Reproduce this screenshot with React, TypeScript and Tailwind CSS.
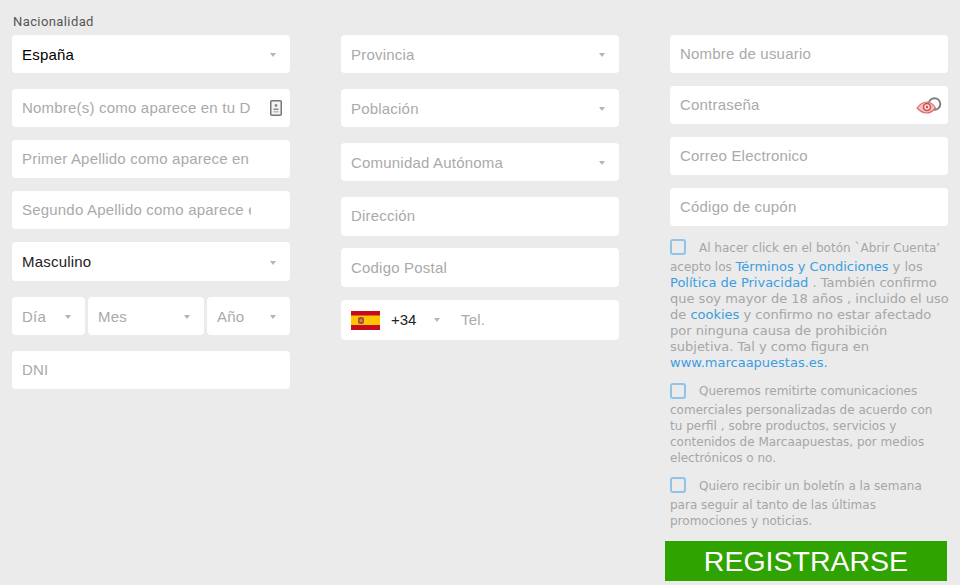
const font = "font-['Liberation_Sans',Arial,sans-serif]"

function Caret() {
  return <span className="h-0 w-0 border-x-[3.5px] border-t-[4px] border-x-transparent border-t-[#b5b5b5]" />
}

function Select({ label, tone = 'text-[#aaaaaa]', className }: { label: string; tone?: string; className: string }) {
  return (
    <div className={`flex items-center justify-between rounded-[4px] bg-white pl-[10px] pr-[14px] pt-[2px] text-[15px] tracking-[0.2px] ${tone} ${className}`}>
      <span>{label}</span>
      <Caret />
    </div>
  )
}

function Field({ placeholder, className, flush, children }: { placeholder: string; className: string; flush?: boolean; children?: React.ReactNode }) {
  return (
    <div className={`relative rounded-[4px] bg-white ${flush ? '' : 'pb-[2px]'} ${className}`}>
      <input
        placeholder={placeholder}
        className={`h-full w-full bg-transparent pl-[10px] pr-[39px] text-[15px] tracking-[0.2px] outline-none placeholder:text-[#aaaaaa] ${font}`}
      />
      {children}
    </div>
  )
}

function IdIcon() {
  return (
    <svg className="absolute right-[8px] top-[11px]" width="12" height="16" viewBox="0 0 12 16">
      <rect x="0.75" y="0.75" width="10.5" height="14.5" rx="1" fill="#f4f4f4" stroke="#777777" strokeWidth="1.5" />
      <circle cx="6" cy="5.500" r="1.400" fill="#888888" />
      <path d="M3.500 8.500h5v1.500h-5z" fill="#888888" />
      <path d="M3.500 11h5v1.500h-5z" fill="#bbbbbb" />
    </svg>
  )
}

function EyeIcon() {
  return (
    <svg className="absolute right-[6px] top-[10px]" width="26" height="18" viewBox="0 0 26 18">
      <circle cx="18.500" cy="8" r="5.800" fill="none" stroke="#7f7f7f" strokeWidth="2" />
      <path d="M1 12C4 8 8 6 11 6S17 8 19.500 12C17 15 14 17 10.500 17S4 15 1 12Z" fill="#f3c4c4" stroke="#dc6c6b" strokeWidth="1.200" />
      <circle cx="11" cy="11" r="3.500" fill="#f7e3e3" stroke="#cf4a4a" strokeWidth="1.500" />
      <circle cx="11" cy="11" r="1.200" fill="#cf4a4a" />
    </svg>
  )
}

function Flag() {
  return (
    <svg width="29" height="19" viewBox="0 0 29 19" className="shrink-0">
      <rect width="29" height="19" fill="#c60b1e" />
      <rect y="4.500" width="29" height="9.500" fill="#ffc400" />
      <rect x="7" y="6" width="6" height="7" rx="2" fill="#ad4a3a" />
      <circle cx="10" cy="9.500" r="1.500" fill="#c98a55" />
    </svg>
  )
}

function Check({ className = 'mb-[4px]' }: { className?: string }) {
  return <span className={`mr-[13px] inline-block h-[16px] w-[16px] rounded-[3px] border-2 border-[#8fc3ea] align-[-7px] ${className}`} />
}

function Link({ children }: { children: React.ReactNode }) {
  return <span className="text-[#3a9ee0]">{children}</span>
}

export default function App() {
  return (
    <div className={`flex h-[585px] w-[960px] gap-[51px] overflow-hidden bg-[#ebebeb] pl-[12px] ${font}`}>
      {/* datos personales */}
      <div className="flex w-[278px] flex-col">
        <label className="mt-[14px] h-[21px] pl-px font-['Roboto',sans-serif] text-[13px] leading-[15px] tracking-[0.4px] text-[#555555]">Nacionalidad</label>
        <Select label="España" tone="text-black" className="h-[38px]" />
        <Field placeholder="Nombre(s) como aparece en tu DNI" className="mt-[16px] h-[38px]"><IdIcon /></Field>
        <Field placeholder="Primer Apellido como aparece en tu DNI" className="mt-[13px] h-[38px]" />
        <Field placeholder="Segundo Apellido como aparece en tu DNI" className="mt-[13px] h-[38px]" />
        <Select label="Masculino" tone="text-[#222222]" className="mt-[13px] h-[39px]" />
        <div className="mt-[16px] flex h-[38px] gap-[3px]">
          <Select label="Día" className="w-[73px]" />
          <Select label="Mes" className="w-[116px]" />
          <Select label="Año" className="w-[83px]" />
        </div>
        <Field placeholder="DNI" className="mt-[16px] h-[38px]" />
      </div>

      {/* direccion */}
      <div className="flex w-[278px] flex-col pt-[35px]">
        <Select label="Provincia" className="h-[38px]" />
        <Select label="Población" className="mt-[16px] h-[38px]" />
        <Select label="Comunidad Autónoma" className="mt-[16px] h-[38px]" />
        <Field placeholder="Dirección" className="mt-[16px] h-[39px]" />
        <Field placeholder="Codigo Postal" flush className="mt-[12px] h-[39px]" />
        <div className="mt-[13px] flex h-[40px] items-center rounded-[4px] bg-white pl-[10px] text-[15px]">
          <Flag />
          <span className="ml-[11px] w-[43px] text-[#222222]">+34</span>
          <Caret />
          <span className="ml-[21px] tracking-[0.2px] text-[#aaaaaa]">Tel.</span>
        </div>
      </div>

      {/* cuenta */}
      <div className="flex w-[278px] flex-col pt-[35px]">
        <Field placeholder="Nombre de usuario" className="h-[38px]" />
        <Field placeholder="Contraseña" className="mt-[13px] h-[38px]"><EyeIcon /></Field>
        <Field placeholder="Correo Electronico" className="mt-[13px] h-[38px]" />
        <Field placeholder="Código de cupón" className="mt-[13px] h-[38px]" />

        <div className="font-['DejaVu_Sans',Verdana,sans-serif] text-[12px] leading-[16px] text-[#a6a6a6]">
          <p className="mt-[13px] w-[281px]">
            <Check />Al hacer click en el botón `Abrir Cuenta’ acepto los{' '}
            <span className="text-[13px]"><Link>Términos y Condiciones</Link> y los <Link>Política de Privacidad</Link> . También confirmo que soy mayor de 18 años , incluido el uso de <Link>cookies</Link> y confirmo no estar afectado por ninguna causa de prohibición subjetiva. Tal y como figura en <Link>www.marcaapuestas.es.</Link></span>
          </p>
          <p className="mt-[12px]">
            <Check className="mb-[3px]" />Queremos remitirte comunicaciones comerciales personalizadas de acuerdo con tu perfil , sobre productos, servicios y contenidos de Marcaapuestas, por medios electrónicos o no.
          </p>
          <p className="mt-[11px]">
            <Check />Quiero recibir un boletín a la semana para seguir al tanto de las últimas promociones y noticias.
          </p>
        </div>

        <button className="-ml-[5px] mt-[12px] h-[40px] w-[282px] bg-[#2fa300] text-[28.5px] leading-[40px] text-white">REGISTRARSE</button>
      </div>
    </div>
  )
}
